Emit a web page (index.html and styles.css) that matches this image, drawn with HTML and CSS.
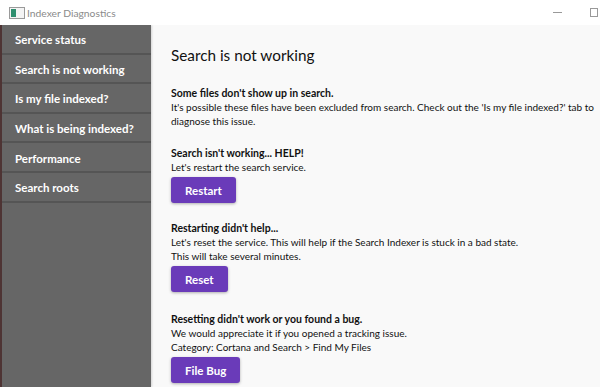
FILE: index.html
```html
<!DOCTYPE html>
<html lang="en">
  <head>
    <meta charset="UTF-8" />
    <meta name="viewport" content="width=device-width, initial-scale=1.0" />
    <title>Indexer Diagnostics</title>
    <link rel="stylesheet" href="styles.css">
  </head>
  <body>
    <div class="window">
      <!-- Title bar -->
      <div class="titlebar">
        <div class="app-title">
          <svg class="app-icon" width="16" height="12" viewBox="0 0 16 12">
            <rect x="0.5" y="0.5" width="15" height="11" fill="#f4f4f4" stroke="#9a9a9a" />
            <rect x="2" y="2" width="5" height="8" fill="#2f8f6f" />
          </svg>
          <span>Indexer Diagnostics</span>
        </div>
        <div class="window-controls">
          <span class="ctl-min"></span>
          <span class="ctl-max"></span>
        </div>
      </div>

      <div class="main">
        <!-- Sidebar -->
        <nav class="sidebar">
          <div class="nav-item">Service status</div>
          <div class="nav-item">Search is not working</div>
          <div class="nav-item">Is my file indexed?</div>
          <div class="nav-item">What is being indexed?</div>
          <div class="nav-item">Performance</div>
          <div class="nav-item">Search roots</div>
        </nav>

        <!-- Page content -->
        <div class="content">
          <h1 class="page-title">Search is not working</h1>

          <div class="section">
            <h2 class="section-title">Some files don't show up in search.</h2>
            <p class="section-text">It's possible these files have been excluded from search. Check out the 'Is my file indexed?' tab to diagnose this issue.</p>
          </div>

          <div class="section">
            <h2 class="section-title">Search isn't working... HELP!</h2>
            <p class="section-text">Let's restart the search service.</p>
            <button class="action-btn">Restart</button>
          </div>

          <div class="section">
            <h2 class="section-title">Restarting didn't help...</h2>
            <p class="section-text">Let's reset the service. This will help if the Search Indexer is stuck in a bad state.<br>This will take several minutes.</p>
            <button class="action-btn">Reset</button>
          </div>

          <div class="section">
            <h2 class="section-title">Resetting didn't work or you found a bug.</h2>
            <p class="section-text">We would appreciate it if you opened a tracking issue.<br>Category: Cortana and Search &gt; Find My Files</p>
            <button class="action-btn">File Bug</button>
          </div>
        </div>
      </div>
    </div>
  </body>
</html>
```

FILE: styles.css
```css
* {
  margin: 0;
  padding: 0;
  box-sizing: border-box;
}

body {
  font-family: Lato, "Noto Sans", sans-serif;
  width: 600px;
  height: 387px;
  overflow: hidden;
  background-color: #f9f9f9;
}

.window {
  display: flex;
  flex-direction: column;
  height: 387px;
}

.titlebar {
  flex-shrink: 0;
  height: 25px;
  background-color: #ffffff;
  display: flex;
  align-items: center;
  justify-content: space-between;
  padding-left: 9px;
}

.app-title {
  display: flex;
  align-items: center;
  gap: 2px;
  font-size: 10.3px;
  color: #8a8a8a;
}

.window-controls {
  display: flex;
  align-items: center;
  height: 100%;
}

.ctl-min {
  width: 9px;
  height: 1px;
  background-color: #999;
  margin-right: 28px;
}

.ctl-max {
  width: 8px;
  height: 9px;
  border: 1px solid #999;
  margin-right: 2px;
}

.main {
  flex: 1;
  min-height: 0;
  display: flex;
  overflow: hidden;
}

.sidebar {
  width: 151px;
  flex-shrink: 0;
  background-color: #666666;
  border-left: 2px solid #4e3434;
  box-shadow: 1px 0 2px rgba(0, 0, 0, 0.15);
}

.nav-item {
  height: 29.6px;
  padding: 2px 0 0 13px;
  display: flex;
  align-items: center;
  color: #ffffff;
  font-weight: 700;
  font-size: 11.5px;
  border-bottom: 2px solid #555555;
}

.content {
  flex: 1;
  padding: 19px 0 0 20px;
  color: #111;
}

.page-title {
  font-size: 15.3px;
  font-weight: 400;
  line-height: 23px;
  margin-bottom: 19px;
}

.section {
  margin-bottom: 18px;
}

.section:last-child {
  margin-top: 20px;
}

.section-title {
  font-size: 10.5px;
  font-weight: 700;
  line-height: 14px;
}

.section-text {
  font-size: 10px;
  line-height: 14px;
}

.action-btn {
  margin-top: 3px;
  height: 26px;
  padding: 0 14px;
  background-color: #6a3bb9;
  color: #ffffff;
  border: none;
  border-radius: 3px;
  font-family: inherit;
  font-weight: 700;
  font-size: 11.5px;
  box-shadow: 0 1px 3px rgba(0, 0, 0, 0.3);
}
```
